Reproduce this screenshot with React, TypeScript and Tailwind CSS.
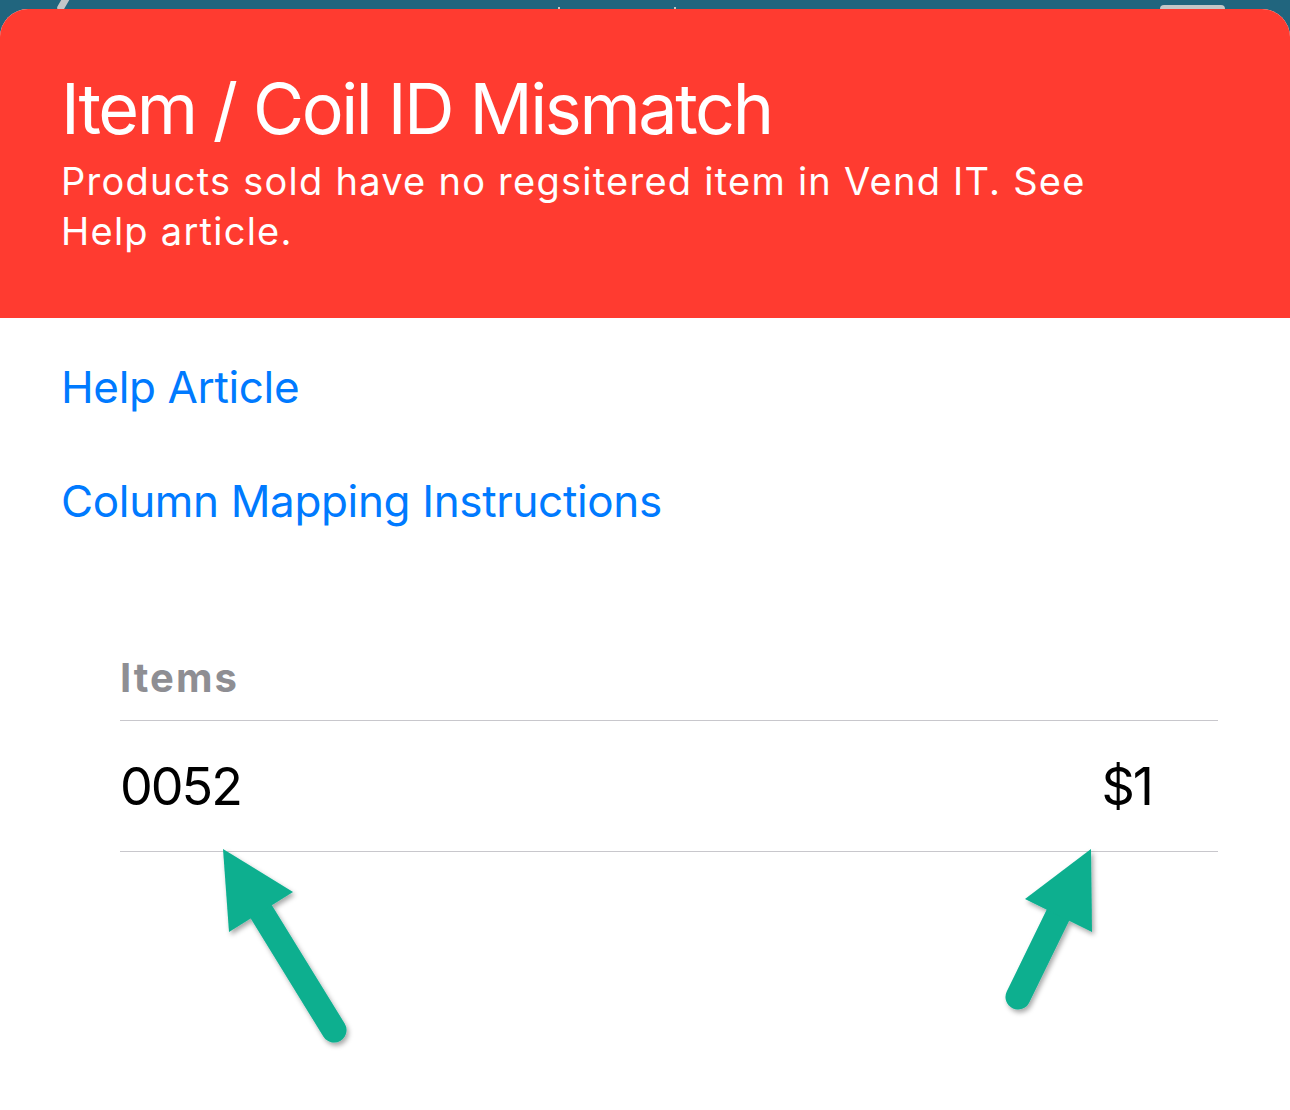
export default function App() {
  const font = { fontFamily: "Inter, 'Noto Sans', sans-serif" };

  return (
    <div className="relative h-[1110px] w-full overflow-hidden bg-[#21657e] pt-[9px]" style={font}>
      {/* bits of the screen behind the sheet */}
      <div className="absolute left-[60px] top-[-6px] h-[18px] w-[7px] rotate-[30deg] rounded-full bg-[#c3c7c8]" />
      <div className="absolute left-[558px] top-[7px] h-[3px] w-[2px] bg-[#c3c7c8]" />
      <div className="absolute left-[674px] top-[7px] h-[3px] w-[2px] bg-[#c3c7c8]" />
      <div className="absolute left-[1160px] top-[5px] h-[12px] w-[65px] rounded-[4px] bg-[#c3c7c8]" />

      <div className="relative flex h-full flex-col overflow-hidden rounded-t-[28px] bg-white">
        <div className="bg-[#ff3b30] pb-[62px] pl-[61px] pr-[62px] pt-[65px] text-white">
          <h1 className="text-[70px] leading-[70px] font-normal tracking-[-2.4px]">Item / Coil ID Mismatch</h1>
          <p className="mt-[12px] text-[38px] leading-[50px] tracking-[1.25px]">
            Products sold have no regsitered item in Vend IT. See
            <br />
            Help article.
          </p>
        </div>

        <div className="flex flex-col items-start gap-[70px] pl-[61px] pr-[62px] pt-[47px] text-[44px] leading-[44px] tracking-[-0.35px] text-[#007aff]">
          <span>Help Article</span>
          <span>Column Mapping Instructions</span>
        </div>

        <div className="ml-[120px] mr-[72px] mt-[135px]">
          <div className="border-b border-[#c8c7cc] pb-[22px] text-[40px] leading-[40px] font-bold tracking-[2px] text-[#8e8e93]">
            Items
          </div>
          <div className="flex items-center justify-between border-b border-[#c8c7cc] pb-[38px] pr-[66px] pt-[40px] text-[52px] leading-[52px] tracking-[-2px] text-black">
            <span>0052</span>
            <span>$1</span>
          </div>
        </div>
      </div>

      {/* annotation arrows */}
      <svg className="pointer-events-none absolute left-0 top-0" width="1290" height="1110">
        <defs>
          <filter id="sh" x="-20%" y="-20%" width="140%" height="140%">
            <feDropShadow dx="2" dy="3" stdDeviation="2.5" floodColor="#000" floodOpacity="0.35" />
          </filter>
        </defs>
        <g fill="#09af8f" stroke="#09af8f" filter="url(#sh)">
          <line x1="262" y1="913" x2="334" y2="1030" strokeWidth="25" strokeLinecap="round" />
          <polygon points="223,849 293,892 229,932" strokeWidth="0" />
          <line x1="1058" y1="915" x2="1018" y2="997" strokeWidth="25" strokeLinecap="round" />
          <polygon points="1091,849 1025,899 1092,932" strokeWidth="0" />
        </g>
      </svg>
    </div>
  );
}
